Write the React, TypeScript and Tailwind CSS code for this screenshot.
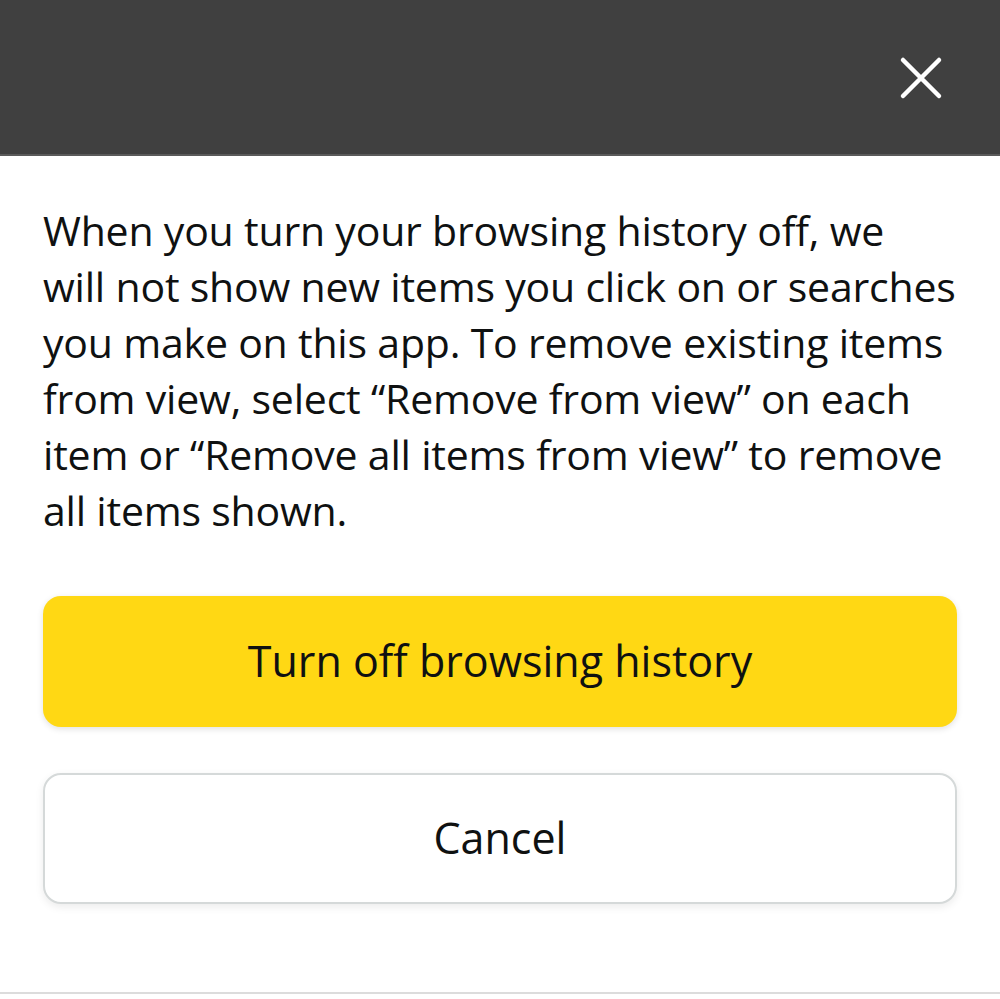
import React from 'react';

const font = { fontFamily: '"Open Sans", "Noto Sans", Arial, sans-serif' };

const CloseIcon: React.FC = () => (
  <svg width="48" height="48" viewBox="0 0 48 48" fill="none">
    <path d="M6 6 L42 42 M42 6 L6 42" stroke="white" strokeWidth="4.5" strokeLinecap="round" />
  </svg>
);

const lines = [
  'When you turn your browsing history off, we',
  'will not show new items you click on or searches',
  'you make on this app. To remove existing items',
  'from view, select “Remove from view” on each',
  'item or “Remove all items from view” to remove',
  'all items shown.',
];

export default function App() {
  return (
    <div className="w-[1000px] h-[999px] bg-white flex flex-col pb-[5px]" style={font}>
      {/* header bar */}
      <div className="h-[156px] bg-[#404040] flex items-center justify-end pr-[55px] border-b-2 border-[#5a5a5a]">
        <button className="mt-[2px]">
          <CloseIcon />
        </button>
      </div>

      <div className="flex-1 flex flex-col px-[43px] pt-[46px] border-b-2 border-[#dcdcdc]">
        <p className="text-[41px] leading-[56px] text-[#0F1111] tracking-[-0.2px] whitespace-nowrap">
          {lines.map((l, i) => (
            <React.Fragment key={i}>
              {l}
              {i < lines.length - 1 && <br />}
            </React.Fragment>
          ))}
        </p>

        <div className="mt-[58px] flex flex-col gap-[46px]">
          <button className="h-[131px] rounded-[18px] bg-[#FFD814] text-[#0F1111] text-[43px] shadow-[0_2px_6px_rgba(0,0,0,0.12)]">
            Turn off browsing history
          </button>
          <button className="h-[131px] rounded-[18px] bg-white border-2 border-[#D5D9D9] text-[#0F1111] text-[43px] shadow-[0_3px_8px_rgba(0,0,0,0.08)]">
            Cancel
          </button>
        </div>
      </div>
    </div>
  );
}
